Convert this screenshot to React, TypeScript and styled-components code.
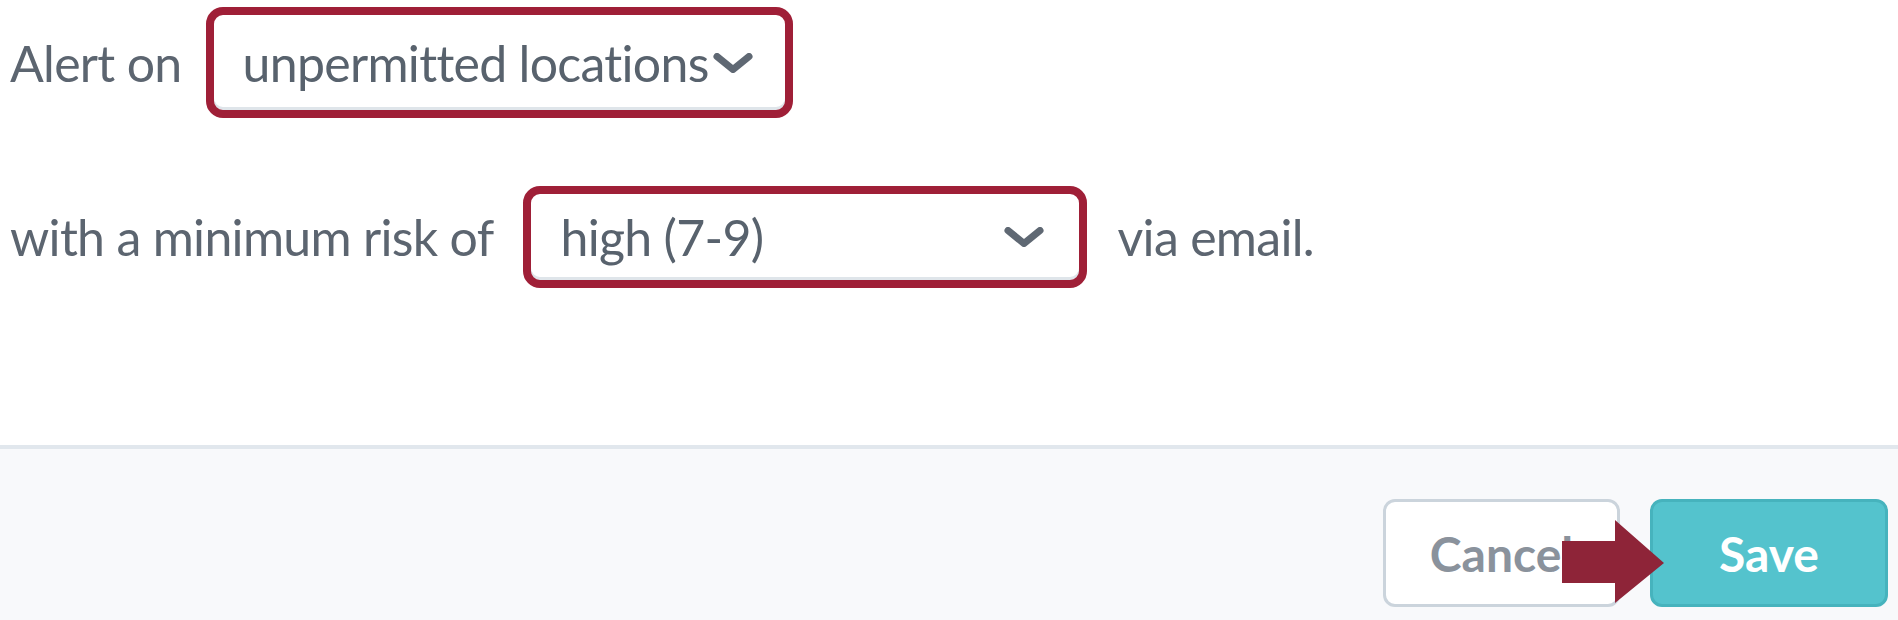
import React from 'react';
import styled, { createGlobalStyle } from 'styled-components';

const GlobalStyle = createGlobalStyle`
  html, body {
    margin: 0;
    padding: 0;
    background: #fff;
    font-family: Lato, 'Open Sans', sans-serif;
  }
`;

const Page = styled.div`
  width: 1898px;
  height: 620px;
  display: flex;
  flex-direction: column;
  overflow: hidden;
`;

const Body = styled.div`
  height: 445px;
  box-sizing: border-box;
  padding: 7px 0 0 10px;
  display: flex;
  flex-direction: column;
  gap: 68px;
`;

const Row = styled.div<{ $gap?: number }>`
  display: flex;
  align-items: center;
  gap: ${(p) => p.$gap ?? 30}px;
  color: #5c6570;
  font-size: 50px;
  letter-spacing: -0.7px;
`;

const Label = styled.span`
  white-space: nowrap;
`;

const Select = styled.div<{ $width: number; $height: number; $tight?: boolean }>`
  box-sizing: border-box;
  flex-shrink: 0;
  width: ${(p) => p.$width}px;
  height: ${(p) => p.$height}px;
  border: 8px solid #9f1f37;
  border-radius: 17px;
  background: #fff;
  box-shadow: inset 0 -3px 0 #dfe5ea;
  display: flex;
  align-items: center;
  justify-content: ${(p) => (p.$tight ? 'flex-start' : 'space-between')};
  gap: 4px;
  padding: 0 ${(p) => (p.$tight ? 28 : 35)}px 0 29px;
  color: #58626d;
  white-space: nowrap;
`;

const ChevronSvg = styled.svg`
  flex-shrink: 0;
`;

const Chevron = () => (
  <ChevronSvg width="40" height="20" viewBox="0 0 40 20">
    <polyline
      points="4,3.5 20,16.5 36,3.5"
      fill="none"
      stroke="#5f6873"
      strokeWidth="7"
      strokeLinecap="round"
      strokeLinejoin="round"
    />
  </ChevronSvg>
);

const Footer = styled.div`
  flex: 1;
  border-top: 4px solid #e1e7ed;
  background: #f8f9fb;
  display: flex;
  justify-content: flex-end;
  align-items: flex-start;
  gap: 30px;
  padding: 50px 10px 0 0;
`;

const ButtonWrap = styled.div`
  position: relative;
`;

const Button = styled.button<{ $primary?: boolean }>`
  box-sizing: border-box;
  width: ${(p) => (p.$primary ? 238 : 237)}px;
  height: 108px;
  border-radius: 12px;
  border: 3px solid ${(p) => (p.$primary ? '#46b3bd' : '#cbd4dc')};
  background: ${(p) => (p.$primary ? '#54c3cd' : '#fff')};
  color: ${(p) => (p.$primary ? '#fff' : '#8a929c')};
  font-family: Lato, 'Open Sans', sans-serif;
  font-weight: 700;
  font-size: 48px;
  padding: 0;
  cursor: pointer;
`;

const Arrow = styled.svg`
  position: absolute;
  left: 179px;
  top: 21px;
`;

export default function App() {
  return (
    <Page>
      <GlobalStyle />
      <Body>
        <Row $gap={24}>
          <Label>Alert on</Label>
          <Select $width={587} $height={111} $tight>
            <span>unpermitted locations</span>
            <Chevron />
          </Select>
        </Row>
        <Row>
          <Label>with a minimum risk of</Label>
          <Select $width={564} $height={102}>
            <span>high (7-9)</span>
            <Chevron />
          </Select>
          <Label>via email.</Label>
        </Row>
      </Body>
      <Footer>
        <ButtonWrap>
          <Button>Cancel</Button>
          <Arrow width="102" height="83" viewBox="0 0 102 83">
            <polygon points="0,21 53,21 53,0 102,43 53,83 53,63 0,63" fill="#8e2438" />
          </Arrow>
        </ButtonWrap>
        <Button $primary>Save</Button>
      </Footer>
    </Page>
  );
}
